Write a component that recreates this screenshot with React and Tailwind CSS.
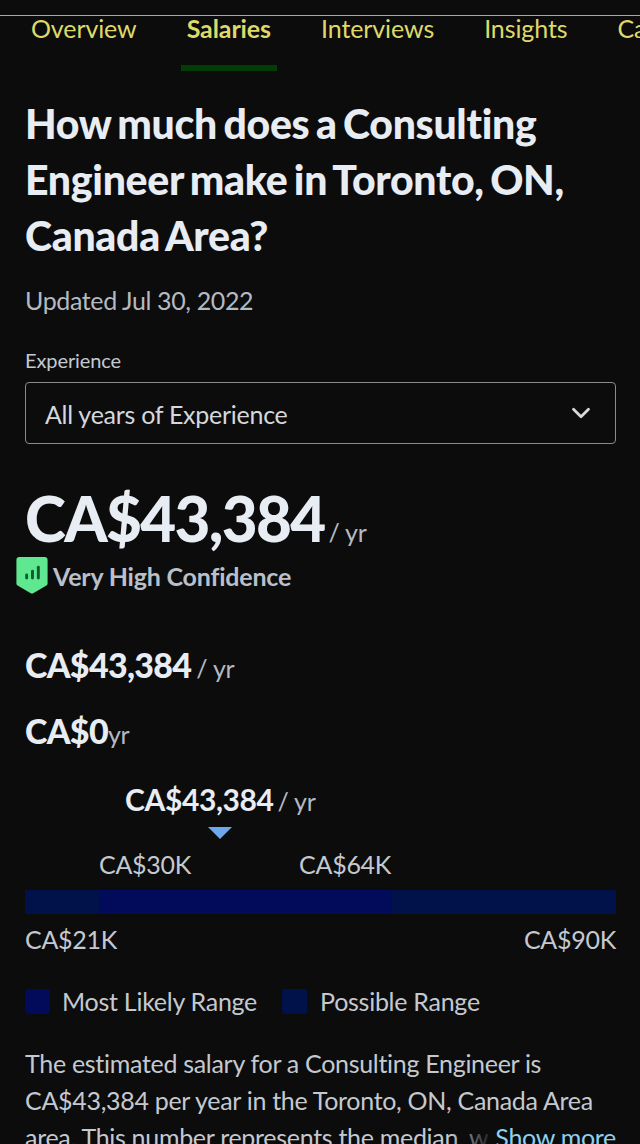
import React from 'react';
import { ChevronDown } from 'lucide-react';

const tabs = [
  { label: 'Overview' },
  { label: 'Salaries', active: true },
  { label: 'Interviews' },
  { label: 'Insights' },
  { label: 'Career Path' },
];

const ConfidenceBadge = () => (
  <svg className="w-[32px] h-[37px] -mt-[2px] shrink-0" viewBox="0 0 32 38">
    <path d="M3 0h26a3 3 0 0 1 3 3v24.5a2 2 0 0 1-1.2 1.8L16.8 37.4a2 2 0 0 1-1.6 0L1.2 29.3A2 2 0 0 1 0 27.5V3a3 3 0 0 1 3-3z" fill="#5fe88f" />
    <rect x="9" y="17" width="3" height="6" rx="1.5" fill="#0f5c32" />
    <rect x="15" y="13" width="3" height="10" rx="1.5" fill="#0f5c32" />
    <rect x="21" y="9" width="3" height="14" rx="1.5" fill="#0f5c32" />
  </svg>
);

const App = () => {
  return (
    <div className="w-[640px] h-[1144px] overflow-hidden bg-[#0c0c0d] text-[#e4e8ee] font-['Lato',sans-serif]">
      <div className="h-[16px] border-b border-[#a8a8a8]"></div>

      <div className="flex gap-[38px] pl-[25px] whitespace-nowrap text-[25px] leading-[24px] tracking-[-0.1px] text-[#dfd968]">
        {tabs.map((tab) => (
          <div key={tab.label} className={`px-[6px] h-[55px] border-b-[6px] ${tab.active ? 'font-bold border-[#023d06]' : 'border-transparent'}`}>
            {tab.label}
          </div>
        ))}
      </div>

      <div className="pl-[25px] pr-[24px] text-[25px] tracking-[-0.27px]">
        <h1 className="mt-[25px] text-[41px] leading-[56px] font-black tracking-[-0.3px] [word-spacing:-3px] text-[#e8ecf3]">
          How much does a Consulting Engineer make in Toronto, ON, Canada Area?
        </h1>
        <p className="mt-[20px] leading-[32px] tracking-[-0.37px] text-[#b4bac2]">Updated Jul 30, 2022</p>

        <p className="mt-[32px] text-[20px] leading-[24px] tracking-[-0.1px] text-[#c4c9d0]">Experience</p>
        <div className="mt-[10px] h-[62px] flex items-center justify-between pl-[19px] pr-[19px] border border-[#8b8b8b] rounded-[4px]">
          <span className="pt-[4px] text-[#d4d8de]">All years of Experience</span>
          <ChevronDown className="w-[30px] h-[30px] text-[#d8d8d8]" strokeWidth={2.2} />
        </div>

        <div className="mt-[38px] flex items-baseline">
          <span className="text-[62px] leading-[72px] font-black tracking-[-1.7px] text-[#e8ecf3]">CA$43,384</span>
          <span className="ml-[4px] text-[#b4bac2]">/ yr</span>
        </div>
        <div className="-ml-[9px] mt-[4px] flex items-center">
          <ConfidenceBadge />
          <span className="ml-[5px] font-bold tracking-[-0.2px] text-[#b9c0ca]">Very High Confidence</span>
        </div>

        <div className="mt-[49px] flex items-baseline">
          <span className="text-[34px] leading-[40px] font-black tracking-[-0.7px] text-[#e8ecf3]">CA$43,384</span>
          <span className="ml-[5px] text-[#b4bac2]">/ yr</span>
        </div>
        <div className="mt-[24px] flex items-baseline">
          <span className="text-[34px] leading-[40px] font-black tracking-[-0.7px] text-[#e8ecf3]">CA$0</span>
          <span className="text-[#b4bac2]">yr</span>
        </div>

        <div className="mt-[25px] ml-[100px] flex items-baseline">
          <span className="text-[30px] leading-[40px] font-bold tracking-[-0.4px] text-[#e8ecf3]">CA$43,384</span>
          <span className="ml-[4px] text-[#b4bac2]">/ yr</span>
        </div>
        <div className="mt-[7px] ml-[183px] w-0 h-0 border-x-[12px] border-x-transparent border-t-[12px] border-t-[#6ea8ec]"></div>

        <div className="mt-[9px] ml-[74px] flex gap-[108px] leading-[32px] text-[#c4c9d0]">
          <span>CA$30K</span>
          <span>CA$64K</span>
        </div>
        <div className="mt-[10px] h-[24px] flex">
          <div className="w-[74px] bg-[#01124a]"></div>
          <div className="w-[293px] bg-[#020b5a]"></div>
          <div className="flex-1 bg-[#01124a]"></div>
        </div>
        <div className="mt-[9px] flex justify-between leading-[32px] text-[#c4c9d0]">
          <span>CA$21K</span>
          <span>CA$90K</span>
        </div>

        <div className="mt-[30px] flex items-center leading-[32px] text-[#c4c9d0]">
          <div className="w-[25px] h-[25px] rounded-[2px] bg-[#020b5a]"></div>
          <span className="ml-[12px]">Most Likely Range</span>
          <div className="ml-[25px] w-[25px] h-[25px] rounded-[2px] bg-[#01124a]"></div>
          <span className="ml-[13px]">Possible Range</span>
        </div>

        <div className="relative mt-[28px] leading-[37px] tracking-[-0.3px] text-[#c4c9d0]">
          <p>
            The estimated salary for a Consulting Engineer is CA$43,384 per year in the Toronto, ON, Canada Area area. This number represents the median, w
          </p>
          <div className="absolute right-0 top-[74px] flex">
            <div className="w-[45px] bg-gradient-to-r from-transparent to-[#0c0c0d]"></div>
            <span className="bg-[#0c0c0d] text-[#8fd0ee]">Show more</span>
          </div>
        </div>
      </div>
    </div>
  );
};

export default App;
